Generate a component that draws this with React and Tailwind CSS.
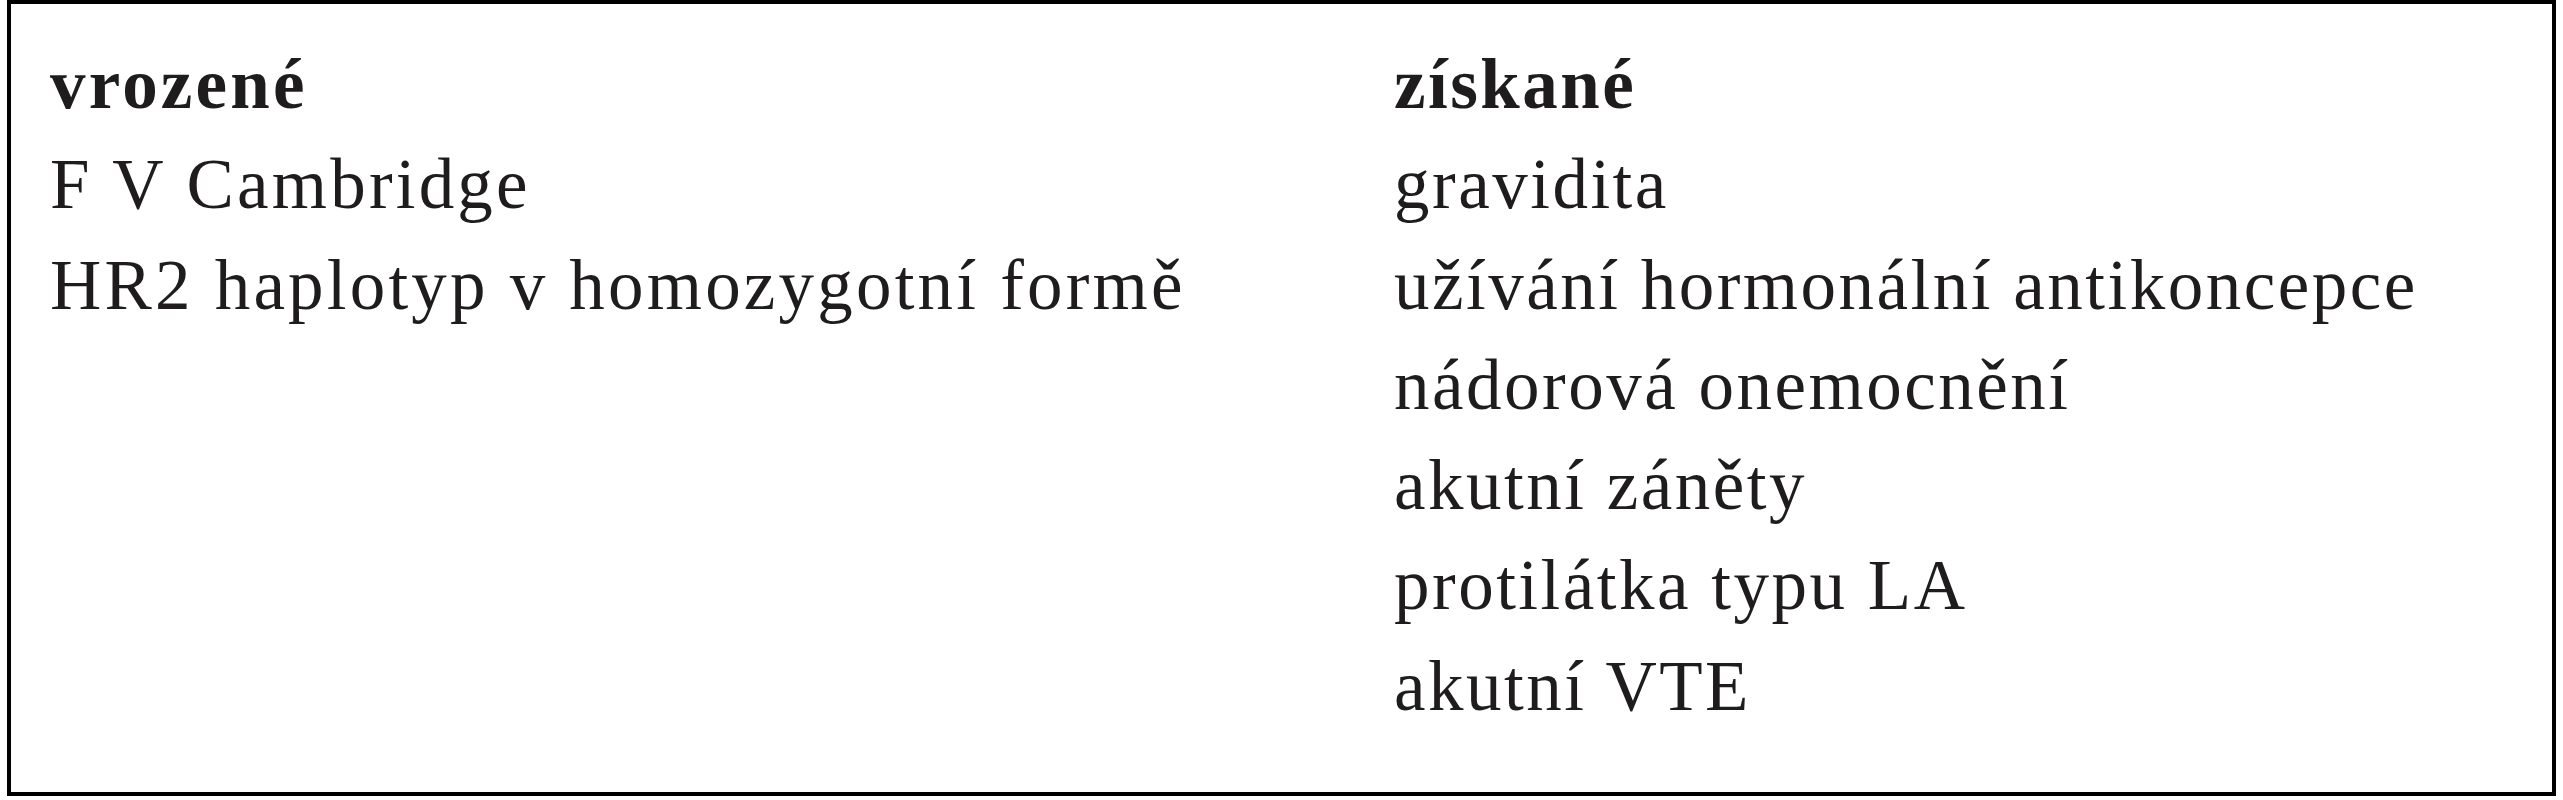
import React from "react";

const left = ["F V Cambridge", "HR2 haplotyp v homozygotní formě"];
const right = [
  "gravidita",
  "užívání hormonální antikoncepce",
  "nádorová onemocnění",
  "akutní záněty",
  "protilátka typu LA",
  "akutní VTE",
];

const Column = ({ title, items, className }) => (
  <div className={className}>
    <div className="font-bold">{title}</div>
    {items.map((item) => (
      <div key={item}>{item}</div>
    ))}
  </div>
);

export default function App() {
  return (
    <div className="bg-white w-[2563px] h-[800px]">
      <div className="ml-[7px] w-[2549px] h-[796px] border-4 border-black bg-white pt-[30px] pl-[39px] flex text-[#1f1c1d] text-[71px] leading-[100.3px] font-['Liberation_Serif',serif]">
        <Column title="vrozené" items={left} className="w-[1344px] whitespace-nowrap tracking-[3.2px]" />
        <Column title="získané" items={right} className="whitespace-nowrap tracking-[2.5px]" />
      </div>
    </div>
  );
}
